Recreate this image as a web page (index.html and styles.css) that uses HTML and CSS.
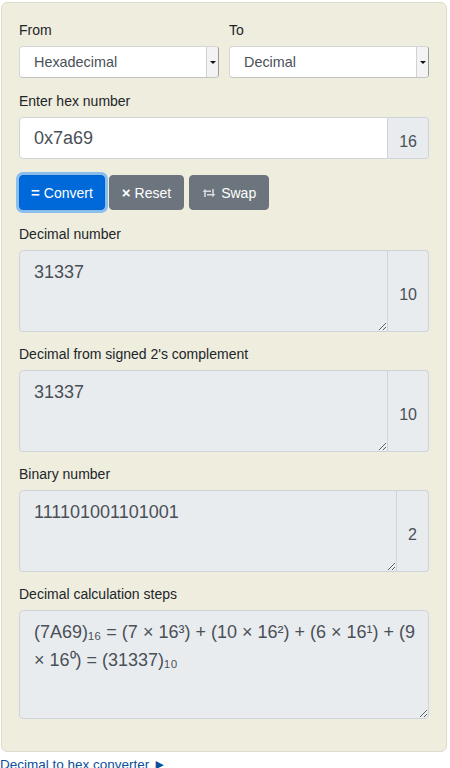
FILE: index.html
```html
<!DOCTYPE html>
<html>
<head>
<meta charset="utf-8">
<link rel="stylesheet" href="styles.css">
</head>
<body>
<div class="card">
  <div class="row2">
    <div class="col">
      <label class="lbl">From</label>
      <div class="sel"><span class="sel-text">Hexadecimal</span><span class="sel-btn"><span class="tri"></span></span></div>
    </div>
    <div class="col">
      <label class="lbl">To</label>
      <div class="sel"><span class="sel-text">Decimal</span><span class="sel-btn"><span class="tri"></span></span></div>
    </div>
  </div>

  <div class="group g-hex">
    <label class="lbl">Enter hex number</label>
    <div class="ig">
      <input class="inp" type="text" value="0x7a69">
      <span class="addon">16</span>
    </div>
  </div>

  <div class="btns">
    <button class="btn btn-primary"><b class="ico-eq">=</b> Convert</button>
    <button class="btn btn-sec"><b class="ico-x">×</b> Reset</button>
    <button class="btn btn-sec"><svg class="ico-swap" width="14" height="10" viewBox="0 0 14 10"><path d="M3 9V3.2H9" fill="none" stroke="currentColor" stroke-width="1.6"/><polygon points="0.6,4 3,1 5.4,4" fill="currentColor"/><path d="M11 1V6.8H5" fill="none" stroke="currentColor" stroke-width="1.6"/><polygon points="8.6,6 11,9 13.4,6" fill="currentColor"/></svg> Swap</button>
  </div>

  <div class="group">
    <label class="lbl">Decimal number</label>
    <div class="ig">
      <textarea class="ta" readonly>31337</textarea>
      <span class="addon">10</span>
    </div>
  </div>

  <div class="group">
    <label class="lbl">Decimal from signed 2's complement</label>
    <div class="ig">
      <textarea class="ta" readonly>31337</textarea>
      <span class="addon">10</span>
    </div>
  </div>

  <div class="group">
    <label class="lbl">Binary number</label>
    <div class="ig">
      <textarea class="ta" readonly>111101001101001</textarea>
      <span class="addon">2</span>
    </div>
  </div>

  <div class="group g-last">
    <label class="lbl">Decimal calculation steps</label>
    <textarea class="ta ta-full" readonly>(7A69)₁₆ = (7 × 16³) + (10 × 16²) + (6 × 16¹) + (9 × 16⁰) = (31337)₁₀</textarea>
  </div>
</div>
<a class="link" href="#">Decimal to hex converter ►</a>
</body>
</html>
```

FILE: styles.css
```css
* { box-sizing: border-box; }

body {
  margin: 0;
  font-family: "Liberation Sans", Arial, sans-serif;
  color: #212529;
  background: #fff;
}

.card {
  width: 446px;
  margin: 2px 0 0 1px;
  padding: 17px 17px 32px 17px;
  background: #efedde;
  border: 1px solid #dddbcc;
  border-radius: 6px;
}

.row2 {
  display: grid;
  grid-template-columns: 1fr 1fr;
  column-gap: 10px;
  margin-bottom: 13px;
}

.lbl {
  display: block;
  font-size: 14px;
  line-height: 21px;
  margin-bottom: 5px;
}

.sel {
  display: flex;
  align-items: stretch;
  height: 32px;
  background: #fff;
  border: 1px solid #d6d6d6;
  border-bottom-color: #c4c4c4;
  border-right-color: #9a9a9a;
  border-radius: 4px;
  overflow: hidden;
}

.sel-text {
  flex: 1;
  display: flex;
  align-items: center;
  padding-left: 14px;
  font-size: 14.4px;
  color: #495057;
}

.sel-btn {
  width: 12px;
  display: flex;
  align-items: center;
  justify-content: center;
  background: #f3f3f3;
  border-left: 1px solid #d2d2d2;
}

.tri {
  width: 0;
  height: 0;
  border-left: 3px solid transparent;
  border-right: 3px solid transparent;
  border-top: 3px solid #111;
}

.group {
  margin-bottom: 12px;
}

.g-hex {
  margin-bottom: 16px;
}

.g-last {
  margin-bottom: 0;
}

.ig {
  display: flex;
  align-items: stretch;
}

.inp {
  flex: 1;
  min-width: 0;
  height: 42px;
  margin: 0;
  padding: 0 14px;
  font-family: inherit;
  font-size: 18px;
  color: #495057;
  background: #fff;
  border: 1px solid #ced4da;
  border-radius: 4px 0 0 4px;
  outline: none;
}

.addon {
  display: flex;
  align-items: center;
  padding: 7px 11px 0;
  font-size: 16px;
  color: #495057;
  background: #e9ecef;
  border: 1px solid #ced4da;
  border-left: 0;
  border-radius: 0 4px 4px 0;
}

.btns {
  display: flex;
  gap: 4px;
  margin-bottom: 14px;
}

.btn {
  height: 35px;
  padding: 0 11px;
  font-family: inherit;
  font-size: 14px;
  color: #fff;
  border: 1px solid transparent;
  border-radius: 4px;
  display: flex;
  align-items: center;
  gap: 4px;
}

.btn-primary {
  background: #0069d9;
  border-color: #0062cc;
  box-shadow: 0 0 0 3px rgba(38, 143, 255, 0.5);
}

.btn-sec {
  background: #6c757d;
  border-color: #6c757d;
  padding: 0 12px;
}

.btn-sec + .btn-sec {
  margin-left: 1px;
}

.ico-eq {
  font-size: 15px;
  font-weight: bold;
}

.ico-x {
  font-size: 15px;
  font-weight: bold;
}

.ico-swap {
  color: #d6d9dc;
  margin-right: 1px;
}

.ta {
  flex: 1;
  min-width: 0;
  display: block;
  height: 82px;
  margin: 0;
  padding: 8px 14px;
  font-family: inherit;
  font-size: 18px;
  line-height: 27px;
  color: #495057;
  background: #e9ecef;
  border: 1px solid #ced4da;
  border-radius: 4px 0 0 4px;
  outline: none;
  resize: vertical;
}

.ta-full {
  width: 100%;
  height: 109px;
  border-radius: 4px;
  line-height: 28px;
  padding: 7px 4px 8px 14px;
}

.link {
  display: block;
  margin-top: 3px;
  font-size: 13.5px;
  line-height: 20px;
  color: #0b4f9c;
  text-decoration: none;
}
```
